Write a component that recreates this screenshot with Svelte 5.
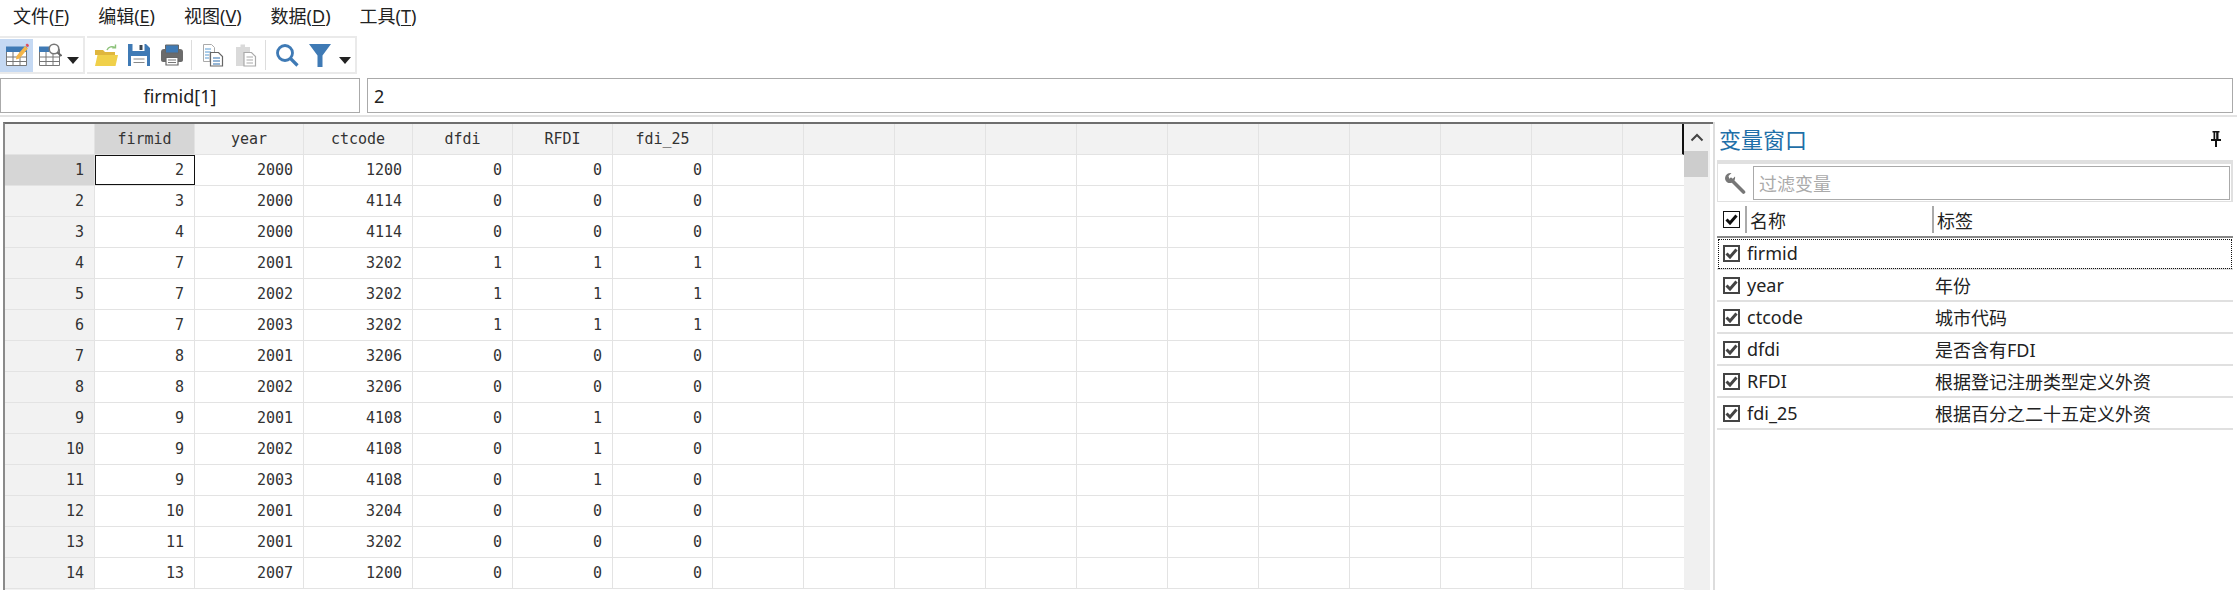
<script>
	const menus = [["文件", "F"], ["编辑", "E"], ["视图", "V"], ["数据", "D"], ["工具", "T"]];
	const columns = ["firmid", "year", "ctcode", "dfdi", "RFDI", "fdi_25"];
	const rows = [
		[2, 2000, 1200, 0, 0, 0],
		[3, 2000, 4114, 0, 0, 0],
		[4, 2000, 4114, 0, 0, 0],
		[7, 2001, 3202, 1, 1, 1],
		[7, 2002, 3202, 1, 1, 1],
		[7, 2003, 3202, 1, 1, 1],
		[8, 2001, 3206, 0, 0, 0],
		[8, 2002, 3206, 0, 0, 0],
		[9, 2001, 4108, 0, 1, 0],
		[9, 2002, 4108, 0, 1, 0],
		[9, 2003, 4108, 0, 1, 0],
		[10, 2001, 3204, 0, 0, 0],
		[11, 2001, 3202, 0, 0, 0],
		[13, 2007, 1200, 0, 0, 0]
	];
	const blanks = Array(10).fill(0);
	const vars = [
		["firmid", ""],
		["year", "年份"],
		["ctcode", "城市代码"],
		["dfdi", "是否含有FDI"],
		["RFDI", "根据登记注册类型定义外资"],
		["fdi_25", "根据百分之二十五定义外资"]
	];
</script>

<div class="app">
	<nav class="menubar">
		{#each menus as [name, key]}
			<span class="menu">{name}(<u>{key}</u>)</span>
		{/each}
	</nav>

	<div class="toolbar">
		<div class="group first">
			<button class="tool active">
				<svg width="24" height="24" viewBox="0 0 24 24">
					<path d="M1.500 6.500h20v16h-20z" fill="#fff" stroke="#777"/>
					<path d="M1 3.500h21V9H1z" fill="#3f7ab5"/>
					<path d="M1.500 14h20M1.500 18.500h20M8 9v14M15 9v14" stroke="#777" fill="none"/>
					<path d="M11.500 13l8.500-10 3 2.500-8.500 10-3.500 1z" fill="#f3b54a"/>
					<path d="M20.500 2l1.500-1.500 2 1.500-1 2.500z" fill="#e04a5a"/>
				</svg>
			</button>
			<button class="tool">
				<svg width="24" height="24" viewBox="0 0 24 24">
					<path d="M1.500 6.500h20v16h-20z" fill="#fff" stroke="#777"/>
					<path d="M1 3.500h10V9H1z" fill="#3f7ab5"/>
					<path d="M1.500 14h20M1.500 18.500h20M8 9v14M15 9v14" stroke="#777" fill="none"/>
					<circle cx="16" cy="6" r="4.800" fill="#fff" stroke="#777" stroke-width="1.600"/>
					<path d="M19.500 9.500l4 3.500" stroke="#666" stroke-width="2.200"/>
				</svg>
			</button>
			<span class="caret"></span>
		</div>
		<div class="group second">
			<button class="tool">
				<svg width="24" height="24" viewBox="0 0 24 24">
					<path d="M1 7h8l2 2h10v3H1z" fill="#dfb63d"/>
					<path d="M3.500 12H24l-2.500 11H1z" fill="#f0d04a"/>
					<path d="M13 7c1.500-3.500 5-4 8-2.500M21.500 1.500v3.300h-3.300" stroke="#8cc27a" stroke-width="1.400" fill="none"/>
				</svg>
			</button>
			<button class="tool">
				<svg width="24" height="24" viewBox="0 0 24 24">
					<path d="M1 1h18l4 4v18H1z" fill="#3f7ab5"/>
					<path d="M5.500 1h12v7h-12z" fill="#fff"/>
					<path d="M12.500 2h3v5h-3z" fill="#3c4650"/>
					<path d="M4 13h16v10H4z" fill="#fff"/>
					<path d="M6.500 16h11M6.500 19.500h11" stroke="#888" stroke-width="1.200"/>
				</svg>
			</button>
			<button class="tool">
				<svg width="24" height="24" viewBox="0 0 24 24">
					<path d="M1 9c0-2 1-3 3-3h16c2 0 3 1 3 3v8c0 1-1 2-2 2H3c-1 0-2-1-2-2z" fill="#6b6b6b"/>
					<path d="M5.500 2h13v8h-13z" fill="#3f7ab5" stroke="#666"/>
					<path d="M6 14.500h12V22H6z" fill="#fff" stroke="#666" stroke-width="1.200"/>
					<path d="M8 17h8M8 19.500h8" stroke="#777"/>
				</svg>
			</button>
			<span class="divider"></span>
			<button class="tool">
				<svg width="24" height="24" viewBox="0 0 24 24">
					<path d="M2.500 1.500h8l3 3v6H9v8H2.500z" fill="#fff" stroke="#aaa"/>
					<path d="M4 6h6M4 9h6M4 12h4M4 15h4" stroke="#5a9bd4" stroke-width="1.200"/>
					<path d="M9.500 9.500h8l4 4v9.500h-12z" fill="#fff" stroke="#666" stroke-width="1.200"/>
					<path d="M12 15h7M12 18h7M12 21h7" stroke="#2f6fae" stroke-width="1.200"/>
				</svg>
			</button>
			<button class="tool">
				<svg width="24" height="24" viewBox="0 0 24 24">
					<path d="M2 4h4.500V1.500h4.500V4h5v19H2z" fill="#dadada"/>
					<path d="M10 9.500h7.500l4 4v9.500H10z" fill="#fff" stroke="#aaa" stroke-width="1.200"/>
					<path d="M12.500 14h6.500M12.500 17h6.500M12.500 20h6.500" stroke="#aaa" stroke-width="1.200"/>
				</svg>
			</button>
			<span class="divider"></span>
			<button class="tool">
				<svg width="24" height="24" viewBox="0 0 24 24">
					<circle cx="10" cy="10" r="7.500" fill="none" stroke="#3f7ab5" stroke-width="2.800"/>
					<path d="M15.500 15.500l7 7" stroke="#3f7ab5" stroke-width="3.200"/>
				</svg>
			</button>
			<button class="tool">
				<svg width="24" height="24" viewBox="0 0 24 24">
					<path d="M1 1h22l-8.500 11.500V24h-5V12.500z" fill="#3f7ab5"/>
				</svg>
			</button>
			<span class="caret"></span>
		</div>
	</div>

	<div class="formula">
		<div class="namebox">firmid[1]</div>
		<div class="valuebox">2</div>
	</div>
	<div class="rule"></div>

	<div class="workspace">
		<div class="grid">
			<div class="table">
				<div class="row head">
					<div class="cell rownum"></div>
					{#each columns as c, i}
						<div class="cell col{i}" class:current={i === 0}>{c}</div>
					{/each}
					{#each blanks as _}
						<div class="cell blank"></div>
					{/each}
				</div>
				{#each rows as r, n}
					<div class="row">
						<div class="cell rownum" class:current={n === 0}>{n + 1}</div>
						{#each r as v, i}
							<div class="cell col{i}" class:selected={n === 0 && i === 0}>{v}</div>
						{/each}
						{#each blanks as _}
							<div class="cell blank"></div>
						{/each}
					</div>
				{/each}
			</div>
			<div class="scrollbar">
				<div class="arrow">
					<svg width="14" height="9" viewBox="0 0 14 9"><path d="M1.500 7.500L7 2l5.500 5.500" fill="none" stroke="#444" stroke-width="2"/></svg>
				</div>
				<div class="thumb"></div>
			</div>
		</div>

		<aside class="panel">
			<div class="title">
				<span>变量窗口</span>
				<svg width="12" height="17" viewBox="0 0 12 17">
					<path d="M2.500 1h7v1.500H8.500V9H11v2H1V9h2.500V2.500h-1zM5.200 2.500V9h1V2.500zM5 11h2v6H5z" fill="#111" fill-rule="evenodd"/>
				</svg>
			</div>
			<div class="filter">
				<svg width="22" height="22" viewBox="0 0 22 22">
					<path d="M7 7.500L19.500 20" stroke="#777" stroke-width="3.600" stroke-linecap="round"/>
					<path d="M1 6a5.500 5.500 0 0 1 6.500-5L4.500 4l.8 2.700L8 7.500l3-3A5.500 5.500 0 0 1 4.500 11 5.500 5.500 0 0 1 1 6z" fill="#777"/>
				</svg>
				<div class="search">过滤变量</div>
			</div>
			<div class="varhead">
				<span class="check head-check">
					<svg width="13" height="11" viewBox="0 0 13 11"><path d="M1.500 5.500L5 9l6.500-7.500" fill="none" stroke="#111" stroke-width="3"/></svg>
				</span>
				<span class="hname">名称</span>
				<span class="hlabel">标签</span>
			</div>
			{#each vars as [name, label], i}
				<div class="var" class:focus={i === 0}>
					<span class="check">
						<svg width="13" height="11" viewBox="0 0 13 11"><path d="M1.500 5.500L5 9l6.500-7.500" fill="none" stroke="#444" stroke-width="3"/></svg>
					</span>
					<span class="vname">{name}</span>
					<span class="vlabel">{label}</span>
				</div>
			{/each}
		</aside>
	</div>
</div>

<style>
	:global(body) {
		margin: 0;
		background: #fff;
		overflow: hidden;
	}
	.app {
		width: 2237px;
		height: 590px;
		overflow: hidden;
		font-family: "Noto Sans", "Noto Sans CJK SC", sans-serif;
		color: #222;
	}

	.menubar {
		display: flex;
		gap: 29px;
		height: 36px;
		padding: 0 0 6px 13px;
		box-sizing: border-box;
		align-items: center;
		font-size: 18px;
	}
	.menu u {
		text-underline-offset: 2px;
	}

	.toolbar {
		display: flex;
		gap: 2px;
		height: 38px;
	}
	.group {
		display: flex;
		align-items: center;
		box-sizing: border-box;
		border-top: 2px solid #eaeaea;
		border-bottom: 2px solid #eaeaea;
		border-right: 2px solid #eaeaea;
	}
	.first {
		width: 85px;
	}
	.second {
		width: 270px;
		padding-left: 2px;
	}
	.tool {
		display: flex;
		align-items: center;
		justify-content: center;
		width: 33px;
		height: 33px;
		padding: 0;
		border: 0;
		background: none;
	}
	.tool.active {
		background: #c5d9f3;
	}
	.caret {
		width: 0;
		height: 0;
		margin: 10px 0 0 1px;
		border-left: 6px solid transparent;
		border-right: 6px solid transparent;
		border-top: 7px solid #222;
	}
	.second .caret {
		margin-left: 3px;
	}
	.divider {
		width: 1px;
		height: 30px;
		margin: 0 4px 0 3px;
		background: #ddd;
	}

	.formula {
		display: flex;
		gap: 7px;
		margin-top: 4px;
		height: 35px;
		font-size: 18px;
	}
	.namebox, .valuebox {
		box-sizing: border-box;
		border: 1px solid #aaa;
		display: flex;
		align-items: center;
	}
	.namebox {
		width: 360px;
		justify-content: center;
	}
	.valuebox {
		width: 1866px;
		padding-left: 6px;
	}
	.rule {
		height: 2px;
		margin: 2px 0 5px 0;
		background: #e3e3e3;
	}

	.workspace {
		display: flex;
		height: 468px;
	}
	.grid {
		display: flex;
		width: 1710px;
		margin-left: 3px;
		box-sizing: border-box;
		border-top: 2px solid #6e6e6e;
		border-left: 2px solid #8a8a8a;
	}
	.table {
		width: 1679px;
		overflow: hidden;
		font-family: "DejaVu Sans Mono", monospace;
		font-size: 15px;
		color: #333;
		background: linear-gradient(90deg, #f2f2f2 90px, #fff 90px);
	}
	.row {
		display: flex;
		height: 31px;
		border-bottom: 1px solid #e3e3e3;
		box-sizing: border-box;
	}
	.row.head {
		background: #f2f2f2;
		border-right: 2px solid #111;
	}
	.cell {
		box-sizing: border-box;
		flex: none;
		display: flex;
		align-items: center;
		justify-content: flex-end;
		padding-right: 10px;
		border-right: 1px solid #e3e3e3;
		width: 100px;
		background: #fff;
	}
	.head .cell {
		justify-content: center;
		padding-right: 0;
		background: #f2f2f2;
	}
	.cell.rownum {
		width: 90px;
		background: #f2f2f2;
	}
	.cell.col1, .cell.col2 {
		width: 109px;
	}
	.cell.blank {
		width: 91px;
	}
	.cell.current, .head .cell.current {
		background: #d6d6d6;
	}
	.selected {
		outline: 1px solid #111;
		outline-offset: -1px;
	}

	.scrollbar {
		width: 26px;
		background: #f0f0f0;
		height: 100%;
		margin-right: 2px;
	}
	.arrow {
		height: 27px;
		display: flex;
		align-items: center;
		justify-content: center;
	}
	.thumb {
		height: 26px;
		width: 24px;
		background: #cdcdcd;
	}

	.panel {
		width: 520px;
		box-sizing: border-box;
		border-left: 2px solid #ddd;
		padding-left: 2px;
		height: 100%;
		font-size: 18px;
	}
	.title {
		display: flex;
		justify-content: space-between;
		align-items: center;
		height: 38px;
		padding: 0 11px 6px 2px;
		box-sizing: border-box;
		font-size: 22px;
		color: #1f6fa8;
	}
	.filter {
		display: flex;
		align-items: center;
		gap: 7px;
		height: 42px;
		box-sizing: border-box;
		border: 2px solid #e0e0e0;
		border-top-width: 4px;
		border-bottom-width: 1px;
		border-left-width: 1px;
		padding: 0 1px 0 6px;
	}
	.search {
		flex: 1;
		height: 34px;
		box-sizing: border-box;
		border: 1px solid #aaa;
		display: flex;
		align-items: center;
		padding-left: 5px;
		color: #aaa;
	}
	.varhead {
		display: flex;
		align-items: center;
		height: 36px;
		padding: 3px 0 2px 6px;
		box-sizing: border-box;
		border-bottom: 2px solid #888;
	}
	.check {
		box-sizing: border-box;
		width: 17px;
		height: 17px;
		border: 2px solid #444;
		display: flex;
		align-items: center;
		justify-content: center;
		flex: none;
	}
	.head-check {
		border: 1px solid #111;
	}
	.hname {
		margin-left: 5px;
		width: 187px;
		height: 27px;
		border-left: 2px solid #aaa;
		padding-left: 3px;
		box-sizing: border-box;
		display: flex;
		align-items: center;
	}
	.hlabel {
		height: 27px;
		border-left: 2px solid #aaa;
		padding-left: 3px;
		display: flex;
		align-items: center;
	}
	.var {
		display: flex;
		align-items: center;
		height: 32px;
		box-sizing: border-box;
		padding: 0 0 0 6px;
		border-bottom: 2px solid #e0e0e0;
	}
	.var.focus {
		outline: 1px dotted #111;
		outline-offset: -2px;
	}
	.vname {
		width: 188px;
		margin-left: 7px;
	}
</style>
